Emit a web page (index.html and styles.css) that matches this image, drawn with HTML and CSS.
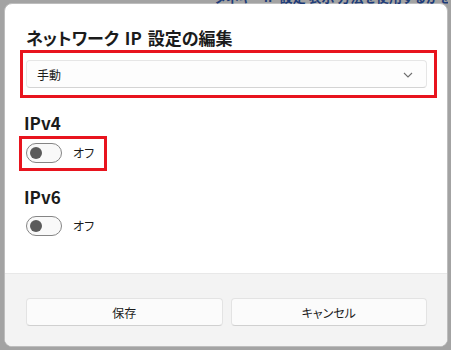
FILE: index.html
```html
<!DOCTYPE html>
<html lang="ja">
<head>
  <meta charset="UTF-8">
  <meta name="viewport" content="width=device-width, initial-scale=1.0">
  <title>ネットワーク IP 設定の編集</title>
  <link rel="stylesheet" href="styles.css">
</head>
<body>
<div class="backdrop-strip">
  <span class="backdrop-text">タネキ…IP 設定 表示 方法を使用するかを切り替えます</span>
</div>

<div class="dialog">
  <div class="dialog-body">
    <h1 class="title">ネットワーク IP 設定の編集</h1>

    <div class="mark mark-select">
      <div class="select">
        <span>手動</span>
        <svg class="chevron" width="10" height="6" viewBox="0 0 10 6">
          <path d="M1 1 L5 5 L9 1" fill="none" stroke="#707070" stroke-width="1.1"/>
        </svg>
      </div>
    </div>

    <h2 class="section">IPv4</h2>
    <div class="mark mark-toggle">
      <div class="toggle-row">
        <span class="toggle"><span class="knob"></span></span>
        <span class="toggle-label">オフ</span>
      </div>
    </div>

    <h2 class="section section-v6">IPv6</h2>
    <div class="toggle-row plain">
      <span class="toggle"><span class="knob"></span></span>
      <span class="toggle-label">オフ</span>
    </div>
  </div>

  <div class="dialog-footer">
    <button class="btn">保存</button>
    <button class="btn">キャンセル</button>
  </div>
</div>
</body>
</html>
```

FILE: styles.css
```css
body {
  margin: 0;
  padding: 3px 3px 3px 4px;
  width: 451px;
  height: 350px;
  box-sizing: border-box;
  background-color: #a3a3a3;
  font-family: "Noto Sans CJK JP", "Noto Sans", sans-serif;
  font-feature-settings: "palt";
  color: #1b1b1b;
  overflow: hidden;
  position: relative;
}

/* window text peeking out above the dialog */
.backdrop-strip {
  position: absolute;
  top: 0;
  left: 214px;
  width: 234px;
  height: 4px;
  overflow: hidden;
  z-index: 2;
}

.backdrop-text {
  display: block;
  margin-top: -10px;
  font-size: 13px;
  line-height: 14px;
  font-weight: 600;
  color: #1e3c78;
  white-space: nowrap;
}

.dialog {
  width: 444px;
  height: 344px;
  box-sizing: border-box;
  display: flex;
  flex-direction: column;
  background-color: #ffffff;
  border: 1px solid #bdbdbd;
  border-radius: 8px;
  overflow: hidden;
}

.dialog-body {
  flex: 1;
  padding: 22px 0 0 15px;
}

.title {
  margin: 0 0 0 6px;
  font-size: 17px;
  line-height: 24px;
  font-weight: 600;
  word-spacing: 2px;
}

.mark {
  border: 3px solid #e8141e;
}

.mark-select {
  width: 401px;
  padding: 7px 7px 7px 3px;
}

.select {
  height: 28px;
  box-sizing: border-box;
  display: flex;
  align-items: center;
  justify-content: space-between;
  padding: 0 13px 0 10px;
  background-color: #fdfdfd;
  border: 1px solid #e6e6e6;
  border-bottom-color: #d4d4d4;
  border-radius: 4px;
  font-size: 12px;
}

.chevron {
  margin-top: 1px;
}

.section {
  margin: 13px 0 0 4px;
  font-size: 17px;
  line-height: 24px;
  font-weight: 600;
}

.section-v6 {
  margin-top: 14px;
}

.mark-toggle {
  display: inline-block;
  margin: 1px 0 0 -1px;
  padding: 4px 10px 5px 4px;
}

.toggle-row {
  display: flex;
  align-items: center;
  gap: 11px;
}

.toggle-row.plain {
  margin: 7px 0 0 6px;
}

.toggle {
  width: 36px;
  height: 20px;
  box-sizing: border-box;
  display: flex;
  align-items: center;
  padding-left: 3px;
  border: 1px solid #858585;
  border-radius: 10px;
  background-color: #f9f9f9;
}

.knob {
  width: 12px;
  height: 12px;
  border-radius: 50%;
  background-color: #5b5b5b;
}

.toggle-label {
  font-size: 12px;
  line-height: 16px;
}

.dialog-footer {
  height: 73px;
  box-sizing: border-box;
  display: flex;
  gap: 8px;
  padding: 24px 20px 0 21px;
  background-color: #f3f3f3;
  border-top: 1px solid #e8e8e8;
}

.btn {
  flex: 1;
  height: 28px;
  border: 1px solid #e3e3e3;
  border-bottom-color: #d0d0d0;
  border-radius: 4px;
  background-color: #fbfbfb;
  font-family: inherit;
  font-feature-settings: "palt";
  font-size: 12px;
  color: #1b1b1b;
}
```
